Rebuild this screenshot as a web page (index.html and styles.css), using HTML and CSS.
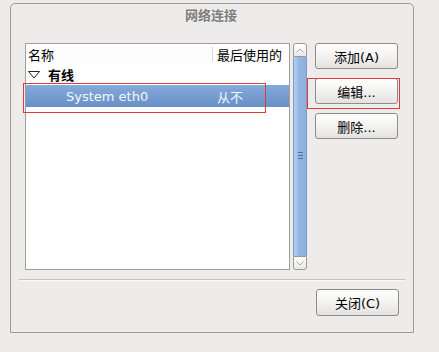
FILE: index.html
```html
<!DOCTYPE html>
<html>
<head>
<meta charset="utf-8">
<link rel="stylesheet" href="styles.css">
</head>
<body>
<div class="page">
  <div class="frame">
    <div class="title">网络连接</div>
    <div class="main">
      <div class="list">
        <div class="header">
          <div class="col1 hcol1">名称</div>
          <div class="hdiv"></div>
          <div class="col2 hcol2">最后使用的</div>
        </div>
        <div class="row group">
          <svg class="expander" width="12" height="8" viewBox="0 0 12 8"><polygon points="0.5,0.5 11.5,0.5 6,7" fill="none" stroke="#222" stroke-width="1"/></svg>
          <span class="gname">有线</span>
        </div>
        <div class="row selected">
          <div class="col1 child">System eth0</div>
          <div class="col2 cval">从不</div>
        </div>
      </div>
      <div class="scroll">
        <div class="sbtn up"><svg width="8" height="5" viewBox="0 0 8 5"><polyline points="0.5,4.5 4,1 7.5,4.5" fill="none" stroke="#a8a8a8" stroke-width="1"/></svg></div>
        <div class="slider">
          <div class="grip"><span></span><span></span><span></span></div>
        </div>
        <div class="sbtn down"><svg width="8" height="5" viewBox="0 0 8 5"><polyline points="0.5,0.5 4,4 7.5,0.5" fill="none" stroke="#a8a8a8" stroke-width="1"/></svg></div>
      </div>
      <div class="buttons">
        <div class="btn">添加(A)</div>
        <div class="btn">编辑...</div>
        <div class="btn">删除...</div>
      </div>
    </div>
    <div class="sep"></div>
    <div class="footer">
      <div class="btn close">关闭(C)</div>
    </div>
  </div>
  <div class="mark mark-row"></div>
  <div class="mark mark-btn"></div>
</div>
</body>
</html>
```

FILE: styles.css
```css
* { box-sizing: border-box; }
html, body { margin: 0; padding: 0; }
body {
  background: #edeceb;
  font-family: "DejaVu Sans", "Noto Sans CJK SC", sans-serif;
  font-size: 13px;
  color: #000;
}
.page {
  position: relative;
  width: 439px;
  height: 352px;
  padding-top: 3px;
  padding-left: 10px;
}
.frame {
  width: 404px;
  height: 330px;
  border: 1px solid #9c9b99;
  border-radius: 5px 5px 0 0;
}
.title {
  padding-top: 4px;
  height: 20px;
  line-height: 16px;
  text-align: center;
  font-weight: bold;
  color: #7e7e7e;
  padding-right: 2px;
}
.main {
  display: flex;
  margin-top: 19px;
  margin-left: 14px;
  height: 227px;
}
.list {
  width: 265px;
  height: 227px;
  background: #fff;
  border: 1px solid #a09e9b;
}
.header {
  display: flex;
  align-items: center;
  height: 20px;
  background: #fdfdfd;
}
.col1 { width: 186px; }
.hcol1 { padding-left: 2px; }
.hdiv {
  width: 1px;
  height: 14px;
  background: #d8d8d8;
}
.col2 { flex: 1; }
.hcol2 { padding-left: 4px; white-space: nowrap; }
.row {
  display: flex;
  align-items: center;
}
.group {
  height: 21px;
  padding-left: 2px;
}
.expander { margin-top: 1px; }
.gname {
  margin-left: 8px;
  font-weight: bold;
}
.selected {
  height: 22px;
  background: linear-gradient(to bottom, #85aadb, #6890c7);
  color: #f4f6fa;
}
.child { padding-left: 40px; }
.cval { padding-left: 5px; }
.scroll {
  margin-left: 3px;
  width: 14px;
  display: flex;
  flex-direction: column;
}
.sbtn {
  height: 14px;
  border: 1px solid #9a9997;
  background: linear-gradient(to bottom, #ffffff, #e9e8e6);
  display: flex;
  align-items: center;
  justify-content: center;
}
.up { border-radius: 3px 3px 0 0; }
.down { border-radius: 0 0 3px 3px; }
.slider {
  flex: 1;
  border-left: 1px solid #7d9dc8;
  border-right: 1px solid #7d9dc8;
  background: linear-gradient(to right, #b7d0f0, #94b5e3 40%, #8eb0e0);
  display: flex;
  align-items: center;
  justify-content: center;
}
.grip {
  display: flex;
  flex-direction: column;
  gap: 2px;
  margin-top: -2px;
}
.grip span {
  display: block;
  width: 5px;
  height: 1px;
  background: #4f6f9e;
}
.buttons {
  margin-left: 8px;
  width: 83px;
  display: flex;
  flex-direction: column;
  gap: 9px;
}
.btn {
  height: 26px;
  border: 1px solid #8e8d8b;
  border-radius: 3px;
  background: linear-gradient(to bottom, #ffffff, #f3f2f1 50%, #e4e3e1);
  display: flex;
  align-items: center;
  justify-content: center;
}
.sep {
  margin-top: 9px;
  margin-left: 8px;
  width: 386px;
  height: 1px;
  background: #c4c3c1;
  box-shadow: 0 1px 0 #fafafa;
}
.footer {
  display: flex;
  justify-content: flex-end;
  margin-top: 9px;
  padding-right: 14px;
}
.close {
  width: 83px;
  height: 27px;
}
.mark {
  position: absolute;
  border: 1px solid #e23a3a;
}
.mark-row {
  left: 23px;
  top: 83px;
  width: 243px;
  height: 30px;
}
.mark-btn {
  left: 307px;
  top: 78px;
  width: 93px;
  height: 31px;
}
```
